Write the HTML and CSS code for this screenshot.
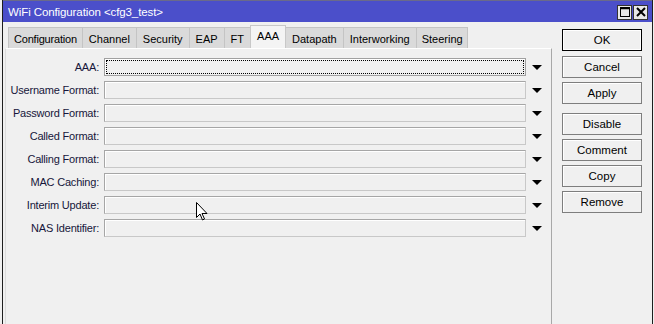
FILE: index.html
```html
<!DOCTYPE html>
<html>
<head>
<meta charset="utf-8">
<link rel="stylesheet" href="styles.css">
</head>
<body>
<div class="window">
  <div class="titlebar">
    <span class="title">WiFi Configuration &lt;cfg3_test&gt;</span>
    <div class="tbtns">
      <span class="tbtn"><svg width="10" height="10" viewBox="0 0 10 10"><rect x="0.5" y="0.5" width="9" height="9" fill="none" stroke="#000" stroke-width="1"/><line x1="0" y1="1.5" x2="10" y2="1.5" stroke="#000" stroke-width="1.5"/></svg></span>
      <span class="tbtn"><svg width="10" height="10" viewBox="0 0 10 10"><path d="M1 1 L9 9 M9 1 L1 9" stroke="#000" stroke-width="2"/></svg></span>
    </div>
  </div>
  <div class="main">
    <div class="left">
      <div class="tabs">
        <span class="tab first">Configuration</span>
        <span class="tab">Channel</span>
        <span class="tab">Security</span>
        <span class="tab">EAP</span>
        <span class="tab">FT</span>
        <span class="tab active">AAA</span>
        <span class="tab">Datapath</span>
        <span class="tab">Interworking</span>
        <span class="tab last">Steering</span>
      </div>
      <div class="panel">
        <div class="row"><span class="lbl">AAA:</span><span class="inp focus"><span class="dots"></span></span><span class="arrow"></span></div>
        <div class="row"><span class="lbl">Username Format:</span><span class="inp"></span><span class="arrow"></span></div>
        <div class="row"><span class="lbl">Password Format:</span><span class="inp"></span><span class="arrow"></span></div>
        <div class="row"><span class="lbl">Called Format:</span><span class="inp"></span><span class="arrow"></span></div>
        <div class="row"><span class="lbl">Calling Format:</span><span class="inp"></span><span class="arrow"></span></div>
        <div class="row"><span class="lbl">MAC Caching:</span><span class="inp"></span><span class="arrow"></span></div>
        <div class="row"><span class="lbl">Interim Update:</span><span class="inp"></span><span class="arrow"></span></div>
        <div class="row"><span class="lbl">NAS Identifier:</span><span class="inp"></span><span class="arrow"></span></div>
      </div>
    </div>
    <div class="right">
      <div class="btn default">OK</div>
      <div class="btn">Cancel</div>
      <div class="btn">Apply</div>
      <div class="btn gap">Disable</div>
      <div class="btn">Comment</div>
      <div class="btn">Copy</div>
      <div class="btn">Remove</div>
    </div>
  </div>
  <svg class="cursor" width="13" height="20" viewBox="0 0 13 20"><path d="M0.5 0.5 L0.5 15.5 L4 12 L6.5 18 L8.5 17 L6 11.5 L11 11.5 Z" fill="#fff" stroke="#000" stroke-width="1"/></svg>
</div>
</body>
</html>
```
FILE: styles.css
```css
* { box-sizing: border-box; }
html, body { margin: 0; padding: 0; }
body {
  width: 654px;
  height: 324px;
  overflow: hidden;
  background: #f0f0f0;
  font-family: "Liberation Sans", Arial, sans-serif;
  font-size: 11px;
  color: #000;
}
.window {
  position: relative;
  margin-left: 2px;
  width: 651px;
  height: 324px;
  overflow: hidden;
  border-left: 1px solid #1e1e1e;
  border-right: 1px solid #1e1e1e;
  background: #f0f0f0;
}
.titlebar {
  height: 22px;
  background: #4b4fca;
  border-top: 1px solid #6a6a8a;
  display: flex;
  align-items: center;
  justify-content: space-between;
  padding: 0 4px 0 5px;
}
.title {
  color: #fff;
  font-size: 11.5px;
  letter-spacing: -0.1px;
}
.tbtns { display: flex; gap: 1px; margin-top: 1px; }
.tbtn {
  width: 15px;
  height: 15px;
  background: #e8e8e8;
  border: 1px solid #333;
  display: flex;
  align-items: center;
  justify-content: center;
}
.main { display: flex; }
.left { width: 549px; padding-left: 2px; }
.tabs {
  display: flex;
  align-items: flex-end;
  height: 26px;
  padding-left: 3px;
}
.tab {
  height: 21px;
  padding: 2px 6px 0;
  background: #dadada;
  border: 1px solid #c4c4c4;
  border-bottom: none;
  display: flex;
  align-items: center;
  font-size: 11px;
  margin-right: -1px;
  white-space: nowrap;
}
.tab.first { letter-spacing: -0.2px; padding: 2px 5px 0; }
.tab.last { padding: 2px 4px 0 5px; }
.tab.active {
  height: 23px;
  background: #f4f4f4;
  border-color: #c8c8c8;
  align-items: flex-start;
  padding-top: 4px;
  position: relative;
  z-index: 1;
}
.panel {
  height: 276px;
  border-top: 1px solid #fff;
  border-left: 1px solid #dcdcdc;
  border-right: 1px solid #a8a8a8;
  background: #f0f0f0;
  padding: 9px 0 0 0;
  display: flex;
  flex-direction: column;
  gap: 5px;
}
.row {
  display: flex;
  align-items: center;
  height: 18px;
}
.lbl {
  width: 93px;
  text-align: right;
  color: #16163a;
  font-size: 11px;
  letter-spacing: -0.2px;
  white-space: nowrap;
}
.inp {
  margin-left: 5px;
  width: 422px;
  height: 18px;
  border: 1px solid #a6a6a6;
  border-right-color: #c8c8c8;
  border-bottom-color: #c8c8c8;
  background: #f0f0f0;
  box-shadow: inset 1px 1px 0 #fff;
  padding: 1px;
}
.inp.focus { border-color: #a0a0a0; }
.dots {
  display: block;
  width: 100%;
  height: 100%;
  border: 1px dotted #000;
}
.arrow {
  margin-left: 6px;
  width: 0;
  height: 0;
  border-left: 5px solid transparent;
  border-right: 5px solid transparent;
  border-top: 5px solid #000;
}
.right {
  padding: 7px 0 0 10px;
  display: flex;
  flex-direction: column;
  gap: 4px;
}
.btn {
  width: 80px;
  height: 22px;
  border: 1px solid #7e7e7e;
  background: #f0f0f0;
  box-shadow: inset 1px 1px 0 #fff;
  display: flex;
  align-items: center;
  justify-content: center;
  font-size: 11.5px;
}
.btn.default {
  border: 1px solid #000;
  box-shadow: inset 0 0 0 1px #fff;
  margin-bottom: 1px;
}
.btn.gap { margin-top: 5px; }
.cursor {
  position: absolute;
  left: 193px;
  top: 202px;
}
```
